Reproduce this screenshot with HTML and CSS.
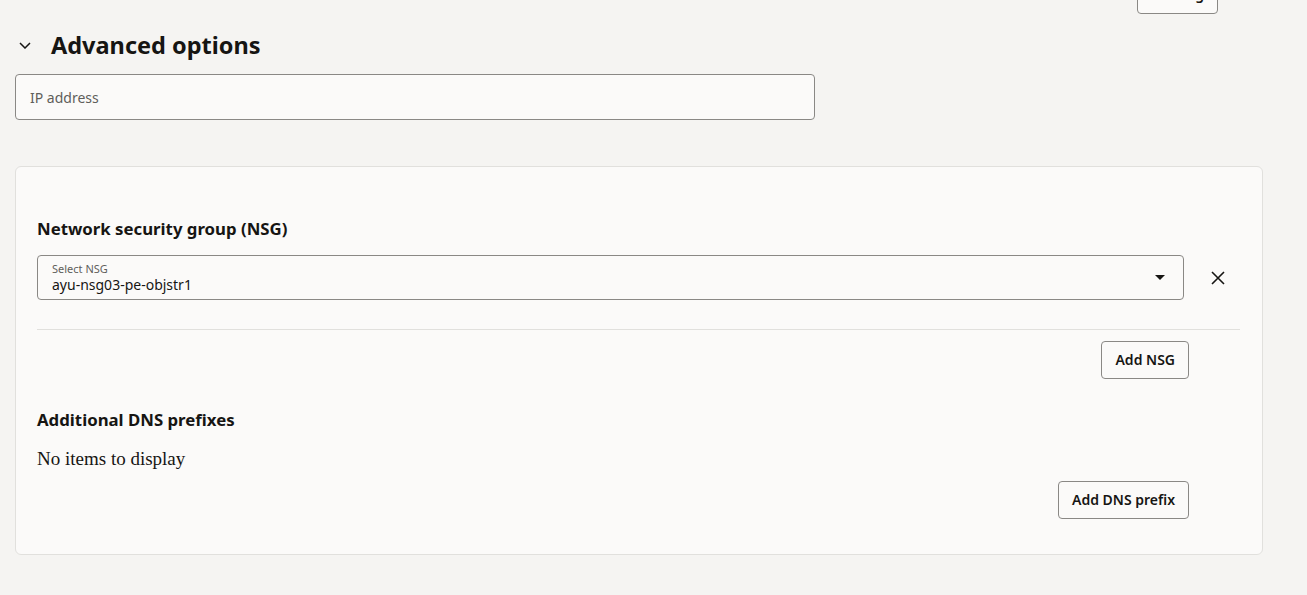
FILE: index.html
```html
<!DOCTYPE html>
<html lang="en">
<head>
<meta charset="utf-8">
<title>Advanced options</title>
<link rel="stylesheet" href="styles.css">
</head>
<body>
<div class="form">
  <div class="tag-row">
    <button class="btn" type="button">Add tag</button>
  </div>
  <div class="section-head">
    <span class="chevron">
      <svg width="12" height="7" viewBox="0 0 12 7"><path d="M1 1l5 5 5-5" fill="none" stroke="#161513" stroke-width="1.5"/></svg>
    </span>
    <h2 class="section-title">Advanced options</h2>
  </div>
  <div class="text-input">
    <span class="placeholder">IP address</span>
  </div>
  <div class="card">
    <h3 class="card-title">Network security group (NSG)</h3>
    <div class="select-row">
      <div class="select">
        <div class="select-text">
          <span class="select-label">Select NSG</span>
          <span class="select-value">ayu-nsg03-pe-objstr1</span>
        </div>
        <svg class="caret" width="10" height="5" viewBox="0 0 10 5"><path d="M0 0h10L5 5z" fill="#161513"/></svg>
      </div>
      <div class="remove">
        <svg width="14" height="14" viewBox="0 0 14 14"><path d="M1 1l12 12M13 1L1 13" stroke="#161513" stroke-width="1.6"/></svg>
      </div>
    </div>
    <div class="divider"></div>
    <div class="btn-row first">
      <button class="btn" type="button">Add NSG</button>
    </div>
    <h3 class="card-title dns">Additional DNS prefixes</h3>
    <p class="empty">No items to display</p>
    <div class="btn-row last">
      <button class="btn" type="button">Add DNS prefix</button>
    </div>
  </div>
</div>
</body>
</html>
```
FILE: styles.css
```css
html, body {
  margin: 0;
  padding: 0;
  background: #f5f4f2;
  font-family: "Noto Sans", "Open Sans", sans-serif;
  color: #161513;
  overflow: hidden;
}
.form {
  width: 1248px;
  margin-left: 15px;
}
.tag-row {
  display: flex;
  justify-content: flex-end;
  padding-right: 45px;
  margin-top: -24px;
}
.btn {
  font-family: "Noto Sans", "Open Sans", sans-serif;
  font-size: 14px;
  font-weight: 600;
  color: #161513;
  background: #fbfaf9;
  border: 1px solid #8a8885;
  border-radius: 4px;
  height: 38px;
  padding: 0 13px;
  line-height: 20px;
  cursor: pointer;
}
.section-head {
  display: flex;
  align-items: center;
  height: 36px;
  margin-top: 13px;
}
.chevron {
  display: flex;
  width: 36px;
  padding-left: 4px;
  box-sizing: border-box;
}
.section-title {
  margin: 0;
  font-size: 23.5px;
  font-weight: 700;
  line-height: 36px;
}
.text-input {
  width: 800px;
  height: 46px;
  box-sizing: border-box;
  border: 1px solid #8a8885;
  border-radius: 4px;
  background: #fbfaf9;
  margin-top: 11px;
  display: flex;
  align-items: center;
  padding-left: 14px;
}
.placeholder {
  font-size: 14px;
  color: #5f5e5b;
}
.card {
  margin-top: 46px;
  box-sizing: border-box;
  width: 1248px;
  height: 389px;
  background: #fbfaf9;
  border: 1px solid #e1e0dd;
  border-radius: 6px;
  padding: 50px 22px 0 21px;
}
.card-title {
  margin: 0;
  font-size: 16.8px;
  font-weight: 700;
  line-height: 24px;
}
.select-row {
  display: flex;
  margin-top: 14px;
}
.select {
  flex: 1;
  height: 45px;
  box-sizing: border-box;
  border: 1px solid #8a8885;
  border-radius: 4px;
  background: #fbfaf9;
  display: flex;
  align-items: center;
  padding: 0 18px 0 14px;
}
.select-text {
  flex: 1;
  display: flex;
  flex-direction: column;
}
.select-label {
  font-size: 11px;
  line-height: 14px;
  color: #5f5e5b;
}
.select-value {
  font-size: 14px;
  line-height: 18px;
}
.remove {
  width: 56px;
  display: flex;
  align-items: center;
  justify-content: center;
  padding-left: 12px;
  box-sizing: border-box;
}
.divider {
  height: 1px;
  background: #e1e0dd;
  margin-top: 29px;
}
.btn-row {
  display: flex;
  justify-content: flex-end;
  padding-right: 51px;
  margin-top: 11px;
}
.card-title.dns {
  margin-top: 29px;
}
.empty {
  margin: 15px 0 0;
  font-family: "Liberation Serif", serif;
  font-size: 19px;
  line-height: 24px;
}
.btn-row.last {
  margin-top: 10px;
}
```
